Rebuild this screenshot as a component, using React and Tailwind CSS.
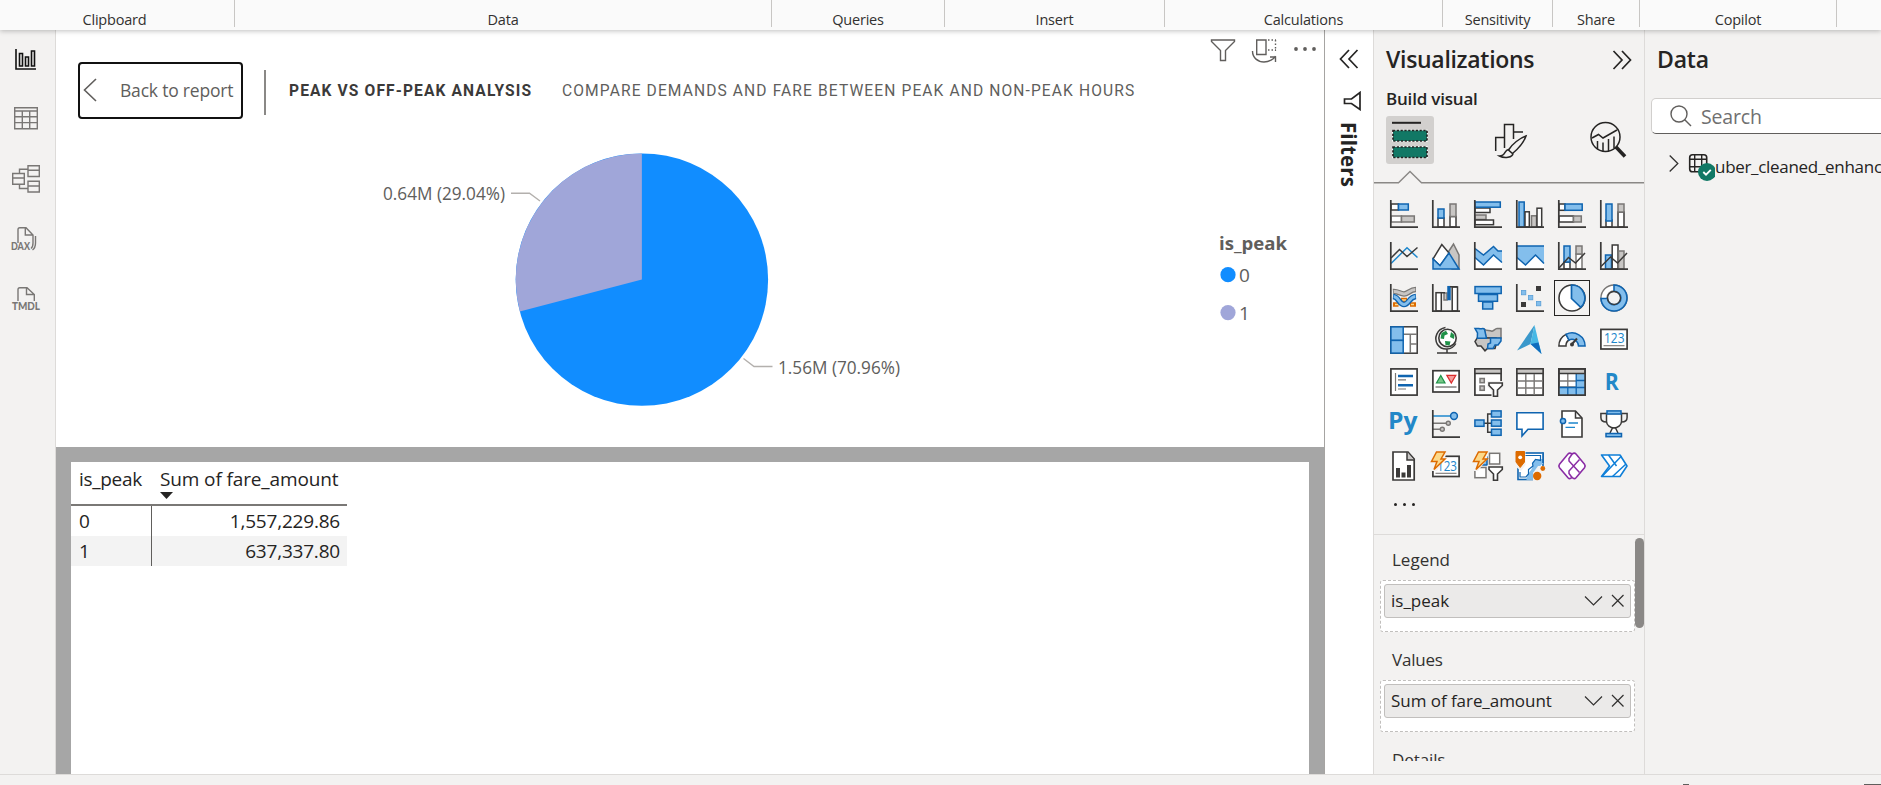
import React from "react";

const D = "#3b3a39";
const B = "#0f64b0";
const L = "#83beec";
const G = "#797775";
const g = "#c8c6c4";

const ribbon = [
  ["Clipboard", "w-[235px] pr-[5px]"],
  ["Data", "w-[537px]"],
  ["Queries", "w-[173px]"],
  ["Insert", "w-[220px]"],
  ["Calculations", "w-[278px]"],
  ["Sensitivity", "w-[110px]"],
  ["Share", "w-[87px]"],
  ["Copilot", "w-[197px]"],
];

function R({ x, y, r, b, f = "#fff", s = D, w = 1.5 }) {
  return <rect x={x} y={y} width={r - x} height={b - y} fill={f} stroke={s} strokeWidth={w} />;
}
function P({ d, f = "none", s = D, w = 1.5, ...rest }) {
  return <path d={d} fill={f} stroke={s} strokeWidth={w} {...rest} />;
}
const Axis = () => <P d="M.8 0V27.2H28" w={1.7} />;
const Bolt = () => <P d="M4.5 0H13L9 7H13L2 17.5L5 9.5H-.5Z" f="#fcd98a" s="#dd6b00" w={1.5} />;
const SmallFunnel = () => <P d="M15 15H28.3V17.5L23.5 22V28.3H19.5V22L15 17.5Z" f="#fff" s={D} w={1.6} />;

const visuals = [
  <><R x={1} y={4} r={8.5} b={10} /><R x={8.5} y={4} r={18.3} b={10} f={L} s={B} /><R x={1} y={16} r={11.5} b={22} s={G} /><R x={11.5} y={16} r={24.3} b={22} f={g} s={G} /><Axis /></>,
  <><R x={6} y={18} r={12} b={27} /><R x={6} y={9} r={12} b={18} f={L} s={B} /><R x={18} y={16.5} r={24} b={27} /><R x={18} y={4} r={24} b={16.5} f={g} s={G} /><Axis /></>,
  <><R x={1} y={8} r={16} b={12.5} /><R x={1} y={2} r={26.3} b={7.2} f={L} s={B} /><R x={1} y={15} r={12} b={19.5} f={g} s={G} /><R x={1} y={20} r={19.5} b={24.7} /><Axis /></>,
  <><R x={3} y={2} r={8.2} b={27} f={L} s={B} /><R x={9} y={11.8} r={13.3} b={27} /><R x={15.5} y={15.8} r={20.5} b={27} f={g} s={G} /><R x={21} y={8.2} r={25.7} b={27} /><Axis /></>,
  <><R x={1} y={4} r={7} b={10.3} /><R x={7} y={4} r={24.2} b={10.3} f={L} s={B} /><R x={1} y={16} r={15.5} b={22} /><R x={15.5} y={16} r={23.3} b={22} f={g} s={G} /><Axis /></>,
  <><R x={6} y={20} r={12} b={27} /><R x={6} y={4} r={12} b={21} f={L} s={B} /><R x={18} y={12} r={24} b={27} /><R x={18} y={4} r={24} b={12} f={g} s={G} /><Axis /></>,

  <><P d="M1 21.5L17 5.8L27.5 15.5" s="#1e87cc" /><P d="M1 16L9.5 7.5L17 14.5L27.5 5.5" /><Axis /></>,
  <><P d="M15 12L21.5 2L27 13V27H20Z" f={g} s={G} /><P d="M9.8 2.5L17 11L8 24L1 17Z" f="#fff" /><P d="M1 17L8 23.5L17 11L27 27H1Z" f={L} s={B} /></>,
  <><P d="M1 16L9.5 23L19.5 13L28 21V27H1Z" f="#fff" s="none" /><P d="M1 6.5L9.5 13L19.5 4.5L24 9H28V20.5L19.5 13L9.5 23L1 15.5Z" f={L} s="none" /><P d="M1 6.5L9.5 13L19.5 4.5L24 9H28M1 15.5L9.5 23L19.5 13L28 20.5" s={B} /><Axis /></>,
  <><P d="M1 16L9.5 23L19.5 13L28 21V27H1Z" f="#fff" s="none" /><P d="M1 4H28V21.5L19.5 13L9.5 23L1 15.5Z" f={L} s="none" /><P d="M1 4H28M1 15.5L9.5 23L19.5 13L28 21.5" s={B} /><Axis /></>,
  <><R x={6} y={20} r={12} b={27} /><R x={6} y={4} r={12} b={20} f={L} s={B} /><R x={18} y={12} r={24} b={27} s={G} /><R x={18} y={4} r={24} b={12} f={g} s={G} /><P d="M1 26L10.5 15.5L17.5 21L27 11" /><Axis /></>,
  <><R x={5.5} y={13} r={11.5} b={27} f={L} s={B} /><R x={12.2} y={3} r={18} b={27} /><R x={18.5} y={9} r={24} b={27} f={g} s={G} /><P d="M1 24.5L10.5 15L17.5 21L27 11" /><Axis /></>,

  <>
    <P d="M3 20.5H8.5M11 16H17M20 20.5H26" s="#dd6b00" w={4.5} /><P d="M5 20.5H8M12 16H16M21 20.5H24" s="#fcd98a" w={1.5} />
    <P d="M3 7.5C8 7 10 10 14 10S20 5.5 26 5.5" s={G} w={5.6} /><P d="M3.7 7.5C8 7 10 10 14 10S20 5.5 25.3 5.5" s={g} w={3} />
    <P d="M3 12.5C9 13 9 20.5 14 20.5S19 13 26 12.5" s={B} w={5.6} /><P d="M3.7 12.5C9 13 9 20.5 14 20.5S19 13 25.3 12.5" s={L} w={2.8} />
    <Axis />
  </>,
  <><R x={4} y={8.7} r={9.3} b={27} /><R x={12} y={9} r={15} b={16} f={g} s={G} /><R x={16} y={2.7} r={18} b={15.5} f={B} s={B} /><R x={20.2} y={3} r={25.5} b={27} /><P d="M10 8.7H13M18 2.7H25.5" /><Axis /></>,
  <><R x={1} y={2.6} r={27.2} b={9.5} f={L} s={B} /><R x={4.5} y={10.5} r={23.5} b={17.3} f={L} s={B} /><R x={8.7} y={18} r={18.7} b={25} f={L} s={B} /></>,
  <><Axis /><rect x="20" y="2" width="5" height="5" fill={D} /><rect x="5" y="18" width="5" height="5" fill={D} />{[[5, 6], [12, 11], [20, 17]].map(([x, y]) => <rect key={x} x={x + 0.4} y={y + 0.4} width="4.4" height="4.4" fill={L} stroke="#5a9fd6" strokeWidth=".8" />)}</>,
  <><circle cx="14" cy="14" r="13" fill="#fff" stroke={D} strokeWidth="1.6" /><P d="M13.5 1A13 13 0 0 1 22.8 23.4L13.5 14.5Z" f={L} s={B} w={1.7} /></>,
  <><circle cx="14" cy="14" r="10" fill="none" stroke={G} strokeWidth="7.5" /><circle cx="14" cy="14" r="10" fill="none" stroke="#fff" strokeWidth="4.7" /><P d="M14 1A13 13 0 1 1 1 14.5H7.5A6.7 6.7 0 1 0 14 7.3Z" f={L} s={B} w={1.6} /><circle cx="14" cy="14" r="6.5" fill="none" stroke={D} strokeWidth="1.3" /></>,

  <><R x={0.8} y={0.8} r={27.2} b={27.2} /><P d="M20.3 8.3V27M13 8.3H27M20.3 18H27" s={G} /><R x={0.9} y={0.9} r={13.2} b={14.4} f={L} s={B} /><R x={0.9} y={14.4} r={13.2} b={27.1} f={L} s={B} /></>,
  <><circle cx="15.5" cy="12" r="8.7" fill="#fff" stroke={D} strokeWidth="1.6" /><path d="M9.5 7L14 4.8L16 8L12.5 9.5L12 13L8.5 12.5ZM19 6L22.5 9L22 13L18 11ZM13 15L18.5 15.5L17.5 19.5L13.5 19Z" fill="#1f9148" /><P d="M13.5 1.5C5 3 1.5 12 5.5 18.5C10 25 20 24.5 23.8 17.5M15 22.5V27M5 27H25" /></>,
  <>
    <P d="M10.5 3.3C13 5 15 4 18 5.2C20 5 21 2.5 23 2.5H27V12H14L12 12Z" f={g} s={G} />
    <P d="M3 12.3L1 15.5L3.5 20H7L11 24.8L13.5 22.5H21L22 19V12H13Z" f={g} s={D} />
    <P d="M1 2.5H5C7 3.5 9 1.5 10.5 3.3L12.5 12.3H3.3L3.5 7Z" f={L} s={B} />
    <P d="M16.5 12H27V15L24 19H21L19 22.5H13.5L14 18L16.5 17Z" f={L} s={B} />
  </>,
  <><path d="M18.5-1L1 24.5L14.5 18Z" fill="#3a98cb" /><path d="M18.5-1L14.5 18L25.5 28Z" fill="#47b8e5" /><path d="M14.5 18L25.5 28L22.5 16.5Z" fill="#0f6cbd" /></>,
  <><P d="M.9 20A13.1 13.1 0 0 1 8 8.3L11 14A6.7 6.7 0 0 0 8 20Z" f="#fff" /><P d="M8 8.3A13.1 13.1 0 0 1 27.1 20H20.5A6.7 6.7 0 0 0 11 14Z" f={L} s={B} /><P d="M13.5 18.5L19 12.5" w={2} /><circle cx="14" cy="18.5" r="2" fill={D} /></>,
  <><R x={0.9} y={3.4} r={27.1} b={23} w={1.7} /><text x="4" y="16.8" fontFamily="Open Sans" fontSize="14.5" textLength="20.5" lengthAdjust="spacingAndGlyphs" fill="#1e87cc">123</text><P d="M3.5 19.7H24.5" s={G} w={1.1} /></>,

  <><R x={0.9} y={0.9} r={27.1} b={27.1} w={1.7} /><P d="M5.5 5V23" s={G} w={1.2} /><P d="M8 8H23M8 17.3H23" s={B} w={2.4} /><P d="M8 11.8H16M8 21H16" s={G} w={1.2} /></>,
  <><R x={0.9} y={2.7} r={27.1} b={24} w={1.7} /><P d="M8.8 7.5L13 15H4.5Z" f="#77c787" s="#1f9148" w={1.2} /><P d="M14.8 7.3H23.8L19.3 15Z" f="#f59b9b" s="#d92c2c" w={1.2} /><P d="M3.5 19H24.5" s={G} w={1.4} /></>,
  <><R x={0.9} y={0.9} r={27.1} b={27.1} w={1.7} /><R x={0.9} y={0.9} r={27.1} b={5.5} f={g} /><R x={6} y={10.5} r={10.3} b={14.7} f={g} s={G} /><R x={6} y={18} r={10.3} b={22.3} f={g} s={G} /><path d="M13 13H30V30H17.5V23L13 18.5Z" fill="#f3f2f1" /><SmallFunnel /></>,
  <><R x={0.9} y={0.9} r={27.1} b={27.1} w={1.7} /><R x={0.9} y={0.9} r={27.1} b={5.5} f={g} s={D} /><P d="M9.8 6V27M18.2 6V27M1.5 13H26.5M1.5 20H26.5" s={G} w={1.4} /></>,
  <><R x={0.9} y={0.9} r={27.1} b={27.1} /><path d="M18 6H27V27H1V19.5H18Z" fill={L} /><P d="M9.8 6V20M1.5 13H18M1.5 19H18" s={G} w={1.3} /><P d="M18.2 6V27M9.8 19V27M18 12.5H27M1 19.5H27" s={B} w={1.3} /><R x={0.9} y={0.9} r={27.1} b={5.5} f={g} /><P d="M.9.9H27.1V27.1H.9Z" w={1.7} /></>,
  <text x="4.8" y="22" fontFamily="Open Sans" fontWeight="700" fontSize="24" textLength="14" lengthAdjust="spacingAndGlyphs" fill="#2288c8">R</text>,

  <text x="-2" y="19" fontFamily="Open Sans" fontWeight="700" fontSize="24" textLength="29.5" lengthAdjust="spacingAndGlyphs" fill="#2288c8">Py</text>,
  <><P d="M1 6H18" s="#1e87cc" /><P d="M1 13.2H14M1 19.3H8" s={G} /><circle cx="22" cy="6" r="3.4" fill={L} stroke={B} strokeWidth="1.5" /><circle cx="16.3" cy="13.2" r="2" fill={g} stroke={G} strokeWidth="1.4" /><circle cx="10.3" cy="19.3" r="2" fill={g} stroke={G} strokeWidth="1.4" /><Axis /></>,
  <><P d="M10 13.2H18M13.7 13.2V4H18M13.7 13.2V22.3H18" /><R x={0.9} y={10} r={10} b={16.3} f={L} s={B} /><R x={17.5} y={0.9} r={27.1} b={7} f={L} s={B} /><R x={17.5} y={10} r={27.1} b={16.2} f={L} s={B} /><R x={17.5} y={19.2} r={27.1} b={25.3} f={L} s={B} /></>,
  <P d="M.9 2.7H27.1V19.2H12L6 26V19.2H.9Z" f="#fff" s={B} w={1.6} />,
  <><P d="M4 9V1H17.5L24 8V27H4V14" f="#fff" w={1.6} /><P d="M17.5 1V8H24" /><circle cx="5" cy="11" r="2.6" fill={L} stroke={B} strokeWidth="1.5" /><P d="M10.5 13H20M7.5 17.3H17" s="#1e87cc" w={1.3} /></>,
  <><P d="M6.5 3.5H.9V7.5C.9 10.5 3 12 6.5 12M21.5 3.5H27.1V7.5C27.1 10.5 25 12 21.5 12" /><P d="M6.5 3.5H21.5V11.5C21.5 15 17.5 18 14 18S6.5 15 6.5 11.5Z" f="#fff" /><P d="M10 23L12.5 18H15.5L18 23" f="#fff" /><R x={7} y={0.9} r={21} b={4} f={L} s={B} /><R x={6} y={23.5} r={21.5} b={26.7} f={L} s={B} /></>,

  <><P d="M3 0H18L24.2 7V28H3Z" f="#fff" w={1.7} /><P d="M17 0V8H24.2" f={g} /><path d="M6 16H10V25.5H6ZM11.5 20.5H15.5V25.5H11.5ZM17 13H21V25.5H17Z" fill={D} /></>,
  <><R x={0.9} y={4.3} r={27.1} b={24.5} w={1.7} /><path d="M-1-1H15L12 9L5 19H-1Z" fill="#f3f2f1" /><text x="5" y="18.7" fontFamily="Open Sans" fontSize="14" textLength="20" lengthAdjust="spacingAndGlyphs" fill="#1e87cc">123</text><P d="M3.5 21.3H24.5" s={G} w={1.1} /><Bolt /></>,
  <><R x={6} y={5} r={13} b={13} f={L} s={B} /><R x={15.5} y={1.3} r={25.7} b={12} s={G} /><R x={0.9} y={15.5} r={12} b={25.7} s={G} /><path d="M-1-1H14.5L12.5 8L4 19H-1Z" fill="#f3f2f1" /><path d="M13 13.5H30V30H17.5V23L13 18.5Z" fill="#f3f2f1" /><SmallFunnel /><Bolt /></>,
  <>
    <R x={2} y={1} r={27} b={27.5} s={B} w={1.6} />
    <path d="M27 1V11L20.5 18L17 21V27.5H11C11 22 14 22 14.5 18S20 15 19 11S24 8 21 5Z" fill="#fff" />
    <path d="M20 7L27 7V11L20.5 18L17 21V27.5H10C12 23 12 22 13.5 20S17 16 16.5 12S19 10 20 7Z" fill={L} />
    <P d="M4 3.5H24.5V8.5L19.5 7.5L16.5 11.5L17 14L12.5 17.5V22L10 25H4V20" s={B} w={1.2} />
    <P d="M27 .5V11" s={B} w={1.6} />
    <path d="M-.5-2H9.5V13L5 19L-1 14Z" fill="#f3f2f1" />
    <path d="M0-.5H8.5V10L4.2 15.5L0 10Z" fill="#dd6b00" stroke="#dd6b00" strokeLinejoin="round" />
    <circle cx="4.2" cy="5.3" r="1.9" fill="#fff" />
    <path d="M22 14H29V29H17V21Z" fill="#f3f2f1" />
    <circle cx="21.2" cy="24" r="4.2" fill="#dd6b00" /><circle cx="26.8" cy="16.5" r="2.4" fill="#dd6b00" />
  </>,
  <><P d="M14 2.2C12.5.9 11 .9 10 2L1.5 12.3C.6 13.5.6 14.5 1.5 15.7L10 25.7C11 26.8 12.5 26.8 14 25.5C15.5 26.8 17 26.8 18 25.7L26.5 15.7C27.4 14.5 27.4 13.5 26.5 12.3L18 2C17 .9 15.5.9 14 2.2Z" f="#fff" s="#8a2da5" w={1.6} /><P d="M14 2.2L11 6.5V9L21.5 20.5M14 25.5L11 21.5V19L21.5 7.5" s="#8a2da5" w={1.5} /></>,
  <><P d="M1.5 3H20L27 14L20 24.5H1.5L9.5 14Z" f="#fff" s="#0f7fd8" w={1.6} strokeLinejoin="round" /><P d="M8.5 3L16.5 14M2 24.5L21.5 4M12.5 24.5L26 12" s="#0f7fd8" w={1.5} /></>,
];

function Chevrons({ className }) {
  return (
    <svg className={className} width="20" height="20" viewBox="0 0 20 20" fill="none" stroke="#252423" strokeWidth="1.7">
      <path d="M1.5 1L10 10L1.5 19M10 1L18.5 10L10 19" />
    </svg>
  );
}

function FieldWell({ label, field, tracking }) {
  return (
    <div className="flex h-[100px] flex-col">
      <div className={"flex h-[45px] shrink-0 items-center pt-1 pl-[18px] text-[17px] text-[#323130] " + tracking[0]}>{label}</div>
      <div className="ml-[6px] h-[52px] w-[255px] rounded-[3px] border border-dashed border-[#c1bfbd] bg-white p-[3px]">
        <div className="flex h-[34px] w-[247px] items-center rounded-[3px] border border-[#c1bfbd] bg-[#ebeae9] pl-[6px] text-[17px] text-[#252423]">
          <span className={"grow whitespace-nowrap " + tracking[1]}>{field}</span>
          <svg width="40" height="14" viewBox="0 0 40 14" className="mr-[6px]" fill="none" stroke="#323130" strokeWidth="1.2">
            <path d="M1 2.5L9.5 11L18 2.5M28 1L39.5 12.5M39.5 1L28 12.5" />
          </svg>
        </div>
      </div>
    </div>
  );
}

export default function App() {
  return (
    <div className="flex h-[785px] w-[1881px] flex-col overflow-hidden bg-[#f3f2f1] font-['Open_Sans',sans-serif] text-[#252423]">
      <header className="relative z-10 flex h-[30px] shrink-0 bg-[#fafafa] shadow-[0_1px_5px_rgba(0,0,0,0.25)]">
        {ribbon.map(([name, w]) => (
          <div key={name} className={"flex h-[27px] shrink-0 justify-center border-r border-[#c8c6c4] pt-[11px] text-[14.5px] leading-[17px] tracking-[-0.2px] text-[#323130] " + w}>
            {name}
          </div>
        ))}
      </header>

      <div className="flex h-[744px] shrink-0">
        <nav className="w-[56px] shrink-0 border-r border-[#dddbd9]">
          <svg width="55" height="300" viewBox="0 30 55 300" fill="none" stroke="#797775" strokeWidth="1.4">
            <g stroke="#111" strokeWidth="1.6">
              <path d="M16 49V69H36M19.5 53.5H22.5V66H19.5ZM25.5 57H28.5V66H25.5ZM31.5 51H34.5V66H31.5Z" />
            </g>
            <path d="M14.7 107.7H37.3V128.8H14.7ZM14.7 111H37.3M14.7 116.8H37.3M14.7 122.6H37.3M22.3 111V129M29.7 111V129" />
            <path d="M12.7 173.5H24.3V184.3H12.7ZM12.7 178H24.3M28 165.7H39.3V176.5H28ZM28 170.3H39.3M28 181.3H39.3V192H28ZM28 186H39.3M19.5 173V169.3H28M19.5 185V188.5H28" />
            <path d="M18 243V229.5Q18 227.7 19.8 227.7H26L33 235V243Q33 247 31 248.5M25.3 228V235H32.5M35.5 236V243Q35.5 248 32.5 249.8" />
            <path d="M18 301V289.5Q18 287.7 19.8 287.7H27L34.3 294.5V301M26.5 288V294.5H34" />
            <g fill="#797775" stroke="none" fontFamily="Lato" fontWeight="900" fontSize="10.5">
              <text x="11" y="250.3" textLength="19" lengthAdjust="spacingAndGlyphs">DAX</text>
              <text x="12" y="310.3" textLength="28" lengthAdjust="spacingAndGlyphs">TMDL</text>
            </g>
          </svg>
        </nav>

        <main className="flex w-[1268px] shrink-0 flex-col">
          <section className="flex h-[417px] flex-col bg-white">
            <div className="relative flex h-[90px] shrink-0 items-center pt-[30px] pl-[22px]">
              <button className="flex h-[57px] w-[165px] shrink-0 items-center rounded-[4px] border-2 border-[#111] pl-[3px] text-[17.5px] tracking-[-0.2px] text-[#605e5c]">
                <svg width="14" height="24" viewBox="0 0 14 24" fill="none" stroke="#605e5c" strokeWidth="1.6"><path d="M13 1L1.5 12L13 23" /></svg>
                <span className="ml-[23px] whitespace-nowrap">Back to report</span>
              </button>
              <div className="mt-[4px] ml-[21px] h-[45px] w-[1.5px] shrink-0 bg-[#8a8886]" />
              <h1 className="mt-[2px] ml-[23px] w-[273px] shrink-0 origin-left scale-x-[0.917] text-[17px] font-bold tracking-[1.2px] whitespace-nowrap text-[#3b3a39] font-['Roboto',sans-serif]">PEAK VS OFF-PEAK ANALYSIS</h1>
              <h2 className="mt-[2px] origin-left scale-x-[0.917] text-[17px] tracking-[1.2px] whitespace-nowrap text-[#605e5c] font-['Roboto',sans-serif]">COMPARE DEMANDS AND FARE BETWEEN PEAK AND NON-PEAK HOURS</h2>
              <svg className="absolute top-[8px] right-[5px]" width="110" height="26" viewBox="1209 38 110 26" fill="none" stroke="#605e5c" strokeWidth="1.4">
                <path d="M1211.5 40H1234.5V41.5L1225.5 50.5V60.5H1220.5V50.5L1211.5 41.5Z" />
                <path d="M1256.7 40H1266V54.5H1256.7ZM1252.5 51C1252.5 58 1258 62 1264 62C1269 62 1274 59 1275.5 56M1270 57H1275.5V62" />
                <path d="M1268 40H1276M1275.5 40V51M1268 50H1276" strokeDasharray="1.5 2" />
                <g fill="#605e5c" stroke="none"><circle cx="1296" cy="49" r="1.9" /><circle cx="1305" cy="49" r="1.9" /><circle cx="1314" cy="49" r="1.9" /></g>
              </svg>
            </div>
            <svg width="1268" height="327" viewBox="56 120 1268 327" fontFamily="Open Sans, sans-serif">
              <circle cx="641.9" cy="279.6" r="126.2" fill="#118dff" />
              <path d="M641.9 279.6V153.4A126.2 126.2 0 0 0 519.8 311.4Z" fill="#a0a6d9" />
              <path d="M511 193.3H529.5L540 201M743.5 358.5L754 366.5H772.5" fill="none" stroke="#b3b0ad" strokeWidth="1.4" />
              <g fontSize="17.5" fill="#605e5c">
                <text x="383" y="199.6" textLength="122" lengthAdjust="spacingAndGlyphs">0.64M (29.04%)</text>
                <text x="778" y="373.6" textLength="122" lengthAdjust="spacingAndGlyphs">1.56M (70.96%)</text>
                <text x="1219" y="250" fontWeight="700" fontSize="18" textLength="68" lengthAdjust="spacingAndGlyphs">is_peak</text>
                <text x="1239" y="282.3" fontSize="19">0</text>
                <text x="1239" y="320.3" fontSize="19">1</text>
              </g>
              <circle cx="1228" cy="274.7" r="7.6" fill="#118dff" />
              <circle cx="1228" cy="312.6" r="7.6" fill="#a0a6d9" />
            </svg>
          </section>
          <section className="h-[327px] bg-[#a6a6a6] px-[15px] pt-[15px]">
            <div className="h-[312px] bg-white">
              <div className="flex h-[44px] w-[276px] border-b-2 border-[#7a7876] pt-[5px] text-[19px] leading-[24px] whitespace-nowrap">
                <span className="w-[89px] pl-[8px] tracking-[-0.3px]">is_peak</span>
                <div>
                  <div className="h-[25px] tracking-[-0.13px]">Sum of fare_amount</div>
                  <svg width="13" height="7" viewBox="0 0 13 7"><path d="M0 0H13L6.5 7Z" fill="#252423" /></svg>
                </div>
              </div>
              {[["0", "1,557,229.86", "bg-white"], ["1", "637,337.80", "bg-[#f3f3f3]"]].map(([k, v, bg]) => (
                <div key={k} className={"flex h-[30px] w-[276px] text-[19px] leading-[31px] " + bg}>
                  <div className="w-[81px] border-r-[1.5px] border-[#605e5c] pl-[8px]">{k}</div>
                  <div className="grow pr-[7px] text-right tracking-[-0.2px]">{v}</div>
                </div>
              ))}
            </div>
          </section>
        </main>

        <aside className="flex w-[49px] shrink-0 flex-col items-start border-l border-[#a6a4a2] bg-white">
          <Chevrons className="mt-[19px] ml-[14px] rotate-180" />
          <svg className="mt-[22px] ml-[18px]" width="19" height="20" viewBox="0 0 19 20" fill="none" stroke="#252423" strokeWidth="1.7"><path d="M17 1.5V18.5L8.5 12.5H1.5V8H8.5Z" /></svg>
          <div className="mt-[11px] ml-[10px] text-[20.5px] leading-[28px] font-bold tracking-[0.1px] [writing-mode:vertical-rl]">Filters</div>
        </aside>

        <aside className="flex w-[272px] shrink-0 flex-col border-x border-[#dddbd9]">
          <div className="flex h-[56px] items-center justify-between pt-[3px] pr-[12px] pl-[12px]">
            <h2 className="text-[23px] font-semibold tracking-[-0.3px]">Visualizations</h2>
            <Chevrons />
          </div>
          <h3 className="h-[30px] pl-[12px] text-[17px] leading-[25px] font-semibold tracking-[-0.2px]">Build visual</h3>
          <svg width="270" height="70" viewBox="1374 116 270 70" fill="none" stroke="#252423" strokeWidth="1.5">
            <rect x="1386" y="116" width="48" height="48" rx="3" fill="#d2d0ce" stroke="none" />
            <path d="M1392 122.8H1421" strokeWidth="2" />
            <g fill="#117865" strokeWidth="1.7"><path d="M1393 130.5H1427V141H1393ZM1393 147H1427V157.5H1393Z" stroke="#fff" /><path d="M1393 130.5H1427V141H1393ZM1393 147H1427V157.5H1393Z" strokeDasharray="2.2 1.6" /></g>
            <path d="M1495.7 151V137.5H1504M1504.5 148V124.5H1513.5V139M1513.5 132H1523" />
            <path d="M1526 136C1520 138 1512 144 1508.5 150L1512.5 153.5C1518 149 1524 142 1526 136ZM1508.5 149.5C1504 150 1506 156 1499.5 156C1504 158.5 1513 158 1513 153" fill="#f3f2f1" />
            <circle cx="1605.5" cy="137" r="14.5" />
            <path d="M1592 138L1598.5 134.5L1603 138L1617 130M1597.5 149V141M1603 151V142.5M1608.5 151V139M1614 148V136.5" />
            <path d="M1616 147L1625 156.5" strokeWidth="3.6" />
            <path d="M1374 182.7H1398.5L1410 171.5L1421.5 182.7H1644" stroke="#8a8886" strokeWidth="1.4" />
          </svg>
          <div className="grid grid-cols-[repeat(6,42px)] auto-rows-[42px] pt-[7px] pl-[9px]">
            {visuals.map((v, i) => (
              <div key={i} className={"flex items-center justify-center " + (i === 16 ? "m-[3px] border border-[#252423]" : "")}>
                <svg width="28" height="28" viewBox="0 0 28 28" className="shrink-0 overflow-visible">{v}</svg>
              </div>
            ))}
          </div>
          <div className="flex h-[48px] shrink-0 gap-[6px] border-b border-[#dddbd9] pt-[16px] pl-[20px]">
            <i className="size-[3px] rounded-full bg-[#252423]" />
            <i className="size-[3px] rounded-full bg-[#252423]" />
            <i className="size-[3px] rounded-full bg-[#252423]" />
          </div>
          <div className="flex h-[226px] shrink-0 overflow-hidden">
            <div className="w-[261px] shrink-0">
              <FieldWell label="Legend" field="is_peak" tracking={["tracking-[0px]", "tracking-[0px]"]} />
              <FieldWell label="Values" field="Sum of fare_amount" tracking={["tracking-[-0.2px]", "tracking-[-0.05px]"]} />
              <div className="h-[45px] pt-[12px] pl-[18px] text-[17px] leading-[25px] tracking-[-0.1px] text-[#323130]">Details</div>
            </div>
            <div className="mt-[3px] h-[90px] w-[9px] rounded-full bg-[#8a8886]" />
          </div>
        </aside>

        <aside className="flex w-[236px] shrink-0 flex-col overflow-hidden">
          <h2 className="flex h-[68px] items-start pt-[12px] pl-[12px] text-[23px] font-semibold tracking-[-0.2px]">Data</h2>
          <div className="ml-[6px] flex h-[36px] w-[260px] items-center rounded-[5px] border border-[#d1cfcd] border-b-[#605e5c] bg-white pl-[18px]">
            <svg width="22" height="22" viewBox="0 0 22 22" fill="none" stroke="#605e5c" strokeWidth="1.4"><circle cx="9" cy="9" r="8" /><path d="M14.5 14.5L21 21" /></svg>
            <span className="mt-[1px] ml-[9px] text-[19.5px] tracking-[-0.15px] text-[#707070]">Search</span>
          </div>
          <div className="flex h-[66px] items-center pl-[24px]">
            <svg width="46" height="28" viewBox="1669 156 46 28" className="shrink-0" fill="none">
              <path d="M1669.7 158.5L1677.8 166.5L1669.7 174.5" stroke="#323130" strokeWidth="1.3" />
              <rect x="1689.7" y="157.7" width="17" height="17" rx="2.8" stroke="#252423" strokeWidth="1.6" />
              <path d="M1694.7 158V175M1701.7 158V175M1690 162.3H1707M1690 169.7H1707" stroke="#252423" strokeWidth="1.4" />
              <circle cx="1707" cy="175" r="9" fill="#117865" />
              <path d="M1703.3 175L1706 177.7L1710.8 172.8" stroke="#fff" strokeWidth="1.8" />
            </svg>
            <span className="text-[17px] tracking-[-0.3px] whitespace-nowrap">uber_cleaned_enhanced</span>
          </div>
        </aside>
      </div>

      <footer className="flex h-[11px] shrink-0 items-end border-t border-[#dddbd9] pl-[1683px]">
        <i className="h-px w-[6px] bg-[#605e5c]" />
        <i className="ml-[175px] h-px w-[17px] bg-[#605e5c]" />
      </footer>
    </div>
  );
}
